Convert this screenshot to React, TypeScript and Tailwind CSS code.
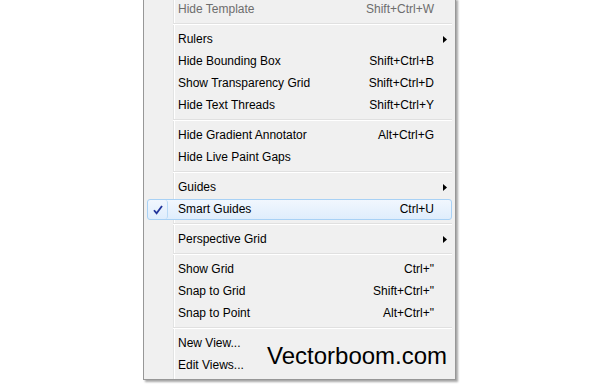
import React from 'react';

type Item =
  | { kind: 'sep' }
  | { kind: 'item'; label: string; shortcut?: string; submenu?: boolean; disabled?: boolean; checked?: boolean };

const items: Item[] = [
  { kind: 'item', label: 'Hide Template', shortcut: 'Shift+Ctrl+W', disabled: true },
  { kind: 'sep' },
  { kind: 'item', label: 'Rulers', submenu: true },
  { kind: 'item', label: 'Hide Bounding Box', shortcut: 'Shift+Ctrl+B' },
  { kind: 'item', label: 'Show Transparency Grid', shortcut: 'Shift+Ctrl+D' },
  { kind: 'item', label: 'Hide Text Threads', shortcut: 'Shift+Ctrl+Y' },
  { kind: 'sep' },
  { kind: 'item', label: 'Hide Gradient Annotator', shortcut: 'Alt+Ctrl+G' },
  { kind: 'item', label: 'Hide Live Paint Gaps' },
  { kind: 'sep' },
  { kind: 'item', label: 'Guides', submenu: true },
  { kind: 'item', label: 'Smart Guides', shortcut: 'Ctrl+U', checked: true },
  { kind: 'sep' },
  { kind: 'item', label: 'Perspective Grid', submenu: true },
  { kind: 'sep' },
  { kind: 'item', label: 'Show Grid', shortcut: 'Ctrl+"' },
  { kind: 'item', label: 'Snap to Grid', shortcut: 'Shift+Ctrl+"' },
  { kind: 'item', label: 'Snap to Point', shortcut: 'Alt+Ctrl+"' },
  { kind: 'sep' },
  { kind: 'item', label: 'New View...' },
  { kind: 'item', label: 'Edit Views...' },
];

function Arrow() {
  return (
    <svg width="4" height="7" viewBox="0 0 4 7" className="block">
      <path d="M0 0 L4 3.5 L0 7 Z" fill="#000" />
    </svg>
  );
}

function Check() {
  return (
    <svg width="10" height="10" viewBox="0 0 10 10" className="block">
      <path d="M1 5.2 L3.6 8.4 L9 1" fill="none" stroke="#21349b" strokeWidth="1.8" strokeLinejoin="miter" />
    </svg>
  );
}

function MenuRow({ item }: { item: Extract<Item, { kind: 'item' }> }) {
  const text = item.disabled ? 'text-[#6d6d6d]' : 'text-black';
  return (
    <div className="relative flex h-[22px] items-center">
      {item.checked && (
        <div className="absolute left-[3px] right-[3px] top-px bottom-0 rounded-[3px] border border-[#a8d1f5] bg-[linear-gradient(to_bottom,#f1f7fe,#dfedfc)]">
          <div className="absolute left-0 top-0 bottom-0 w-[20px] rounded-[3px] border-r border-[#b9daf6] flex items-center justify-center">
            <Check />
          </div>
        </div>
      )}
      <span className={`relative ml-[34px] flex-1 ${text}`}>{item.label}</span>
      {item.shortcut && <span className={`relative ${text}`}>{item.shortcut}</span>}
      <div className="relative flex w-[21px] justify-center pl-px">{item.submenu && <Arrow />}</div>
    </div>
  );
}

export default function App() {
  return (
    <div className="h-[385px] w-[600px] overflow-hidden bg-white">
      <div className="relative ml-[143px] mt-[-2px] w-[313px] border border-t-0 border-[#979797] shadow-[2px_2px_2px_rgba(0,0,0,0.35)]">
        <div className="bg-[linear-gradient(to_right,#f0f0f0_29px,#e2e3e3_29px,#e2e3e3_30px,#ffffff_30px,#ffffff_31px,#f0f0f0_31px)] pb-[3px] font-['Liberation_Sans',Arial,sans-serif] text-[12px] leading-none">
          {items.map((it, i) =>
            it.kind === 'sep' ? (
              <div key={i} className="flex h-[8px] items-center pl-[29px] pr-[3px]">
                <div className="h-[2px] w-full border-t border-b border-t-[#e0e0e0] border-b-white" />
              </div>
            ) : (
              <MenuRow key={i} item={it} />
            )
          )}
        </div>
        <div className="absolute left-[123px] top-[346px] font-['Liberation_Sans',Arial,sans-serif] text-[24px] leading-none text-black">
          Vectorboom.com
        </div>
      </div>
    </div>
  );
}
